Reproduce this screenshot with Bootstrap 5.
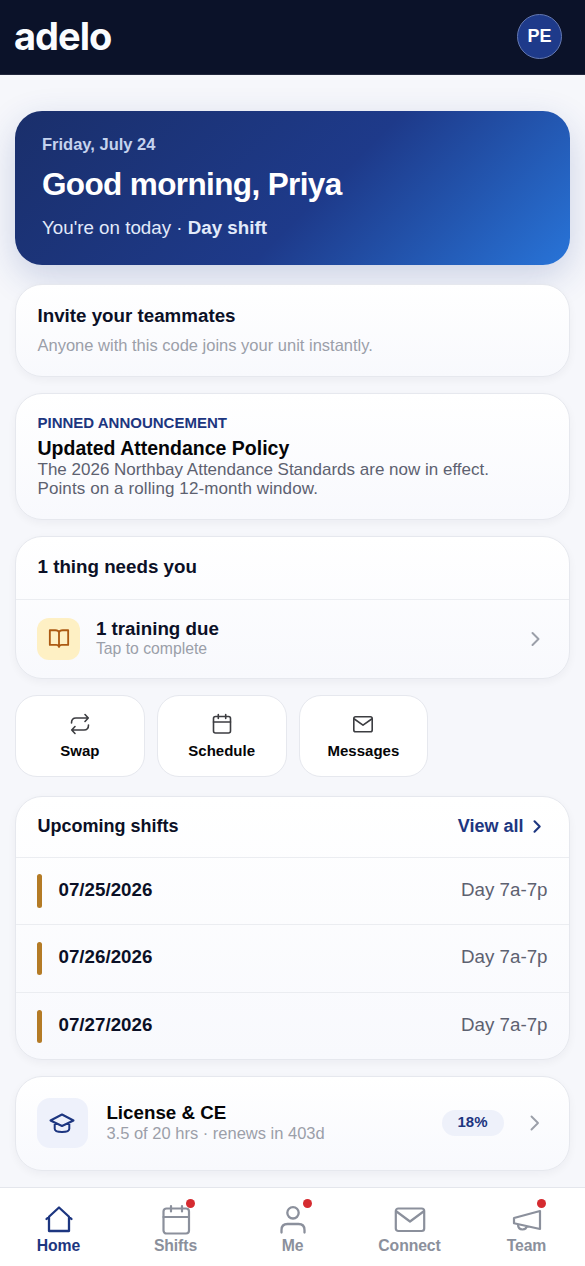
<!DOCTYPE html>
<html lang="en">
<head>
<meta charset="utf-8">
<meta name="viewport" content="width=device-width, initial-scale=1">
<title>adelo</title>
<link href="https://cdn.jsdelivr.net/npm/bootstrap@5.3.0/dist/css/bootstrap.min.css" rel="stylesheet">
<style>
  body { font-family: "Liberation Sans", Arial, sans-serif; background: #f6f7fb; color: #0b1026; line-height: 1.2; overflow: hidden; }
  svg { fill: none; stroke: currentColor; stroke-linecap: round; stroke-linejoin: round; display: block; flex: none; }
  .topbar { height: 75px; background: #0b1229; border-bottom: 1px solid #23283d; padding: 0 23px 2px 14px; }
  .brand { font: 700 38px/1 Inter, sans-serif; letter-spacing: -1px; color: #fafcff; }
  .avatar { width: 45px; height: 45px; background: #1e3a8a; border: 1.5px solid #6478b1; color: #fff; font: 700 18px/1 "Liberation Sans", sans-serif; }
  main { padding: 36px 15px 0; }
  .hero { height: 154px; border-radius: 27px; padding: 24px 27px; color: #fff; background: linear-gradient(135deg, #1a2f6b 0%, #1e3a8a 55%, #2874d8 100%); box-shadow: 0 12px 36px rgba(30,58,138,.2); margin-bottom: 19px; }
  .hero-date { font-size: 16.5px; line-height: 19px; font-weight: 700; color: #c5d3ee; }
  .hero-title { font-size: 31.5px; line-height: 36px; font-weight: 700; letter-spacing: -.02em; margin-top: 12px; }
  .hero-sub { font-size: 18.75px; line-height: 22px; margin-top: 15px; color: #e2eafa; }
  .panel { border: 1px solid #e6e8ee; border-radius: 27px; background: linear-gradient(#fff, #f8f9fd); box-shadow: 0 3px 8px rgba(15,23,42,.045); margin-bottom: 16px; overflow: hidden; }
  .pad { padding-left: 21.5px; padding-right: 21.5px; }
  .invite { height: 93px; padding-top: 20px; }
  .pinned { height: 127px; padding-top: 20px; }
  .heading { font-size: 18.75px; font-weight: 700; line-height: 22px; }
  .muted { color: #9b9fa9; font-size: 16.5px; line-height: 19px; }
  .navy { color: #1d3680; }
  .slate { color: #5d6170; }
  .kicker { font-size: 15px; line-height: 17px; font-weight: 700; }
  .title-lg { font-size: 19.5px; line-height: 22px; font-weight: 700; color: #050507; margin-top: 6px; }
  .copy { font-size: 17px; line-height: 19px; margin-top: 1px; }
  .copy-wide { letter-spacing: .1px; }
  .divide { border-bottom: 1px solid #ebedf1; }
  .tap { font-size: 15.75px; line-height: 18px; }
  .icon-book { width: 43px; height: 42px; margin-left: -.6px; padding-left: 1px; border-radius: 12px; background: #fef0c4; color: #ac5a12; }
  .icon-cap { width: 51px; height: 50px; margin-left: -.6px; border-radius: 13px; background: #eef1fb; color: #1d3680; }
  .tiles { display: grid; grid-template-columns: repeat(4, 1fr); gap: 12px; margin-bottom: 19px; }
  .tile { height: 82px; border: 1px solid #e6e8ee; border-radius: 22px; background: #fff; color: #050507; font-size: 15px; font-weight: 700; line-height: 17px; padding-top: 17px; }
  .tile svg { color: #3c3d41; margin-bottom: 7px; }
  .shift { height: 67.7px; font-size: 18.75px; }
  .shift b, .shift .slate { padding-bottom: 2px; }
  .mark-bar { width: 5px; height: 33.5px; border-radius: 3px; background: #b47b26; margin-left: -.6px; margin-right: 16.6px; }
  .percent { width: 62px; height: 26px; border-radius: 13px; background: #eef1fa; font-size: 15px; font-weight: 700; padding-bottom: 2px; margin-right: 23px; }
  .tabbar { height: 79px; background: #fff; border-top: 1px solid #e4e6ec; }
  .tab { position: relative; flex: 1 1 0; color: #8b909c; font-size: 15.75px; font-weight: 700; line-height: 18px; letter-spacing: -.1px; padding-top: 16px; }
  .tab.navy { color: #1d3680; }
  .tab svg { margin-bottom: 1px; }
  .dot { position: absolute; top: 10.5px; left: calc(50% + 10.5px); width: 9px; height: 9px; border-radius: 50%; background: #d52b30; }
</style>
</head>
<body>
<header class="topbar d-flex align-items-center justify-content-between">
  <span class="brand">adelo</span>
  <span class="avatar rounded-circle d-flex align-items-center justify-content-center">PE</span>
</header>
<main>
  <section class="hero">
    <div class="hero-date">Friday, July 24</div>
    <div class="hero-title">Good morning, Priya</div>
    <div class="hero-sub">You're on today · <b>Day shift</b></div>
  </section>

  <section class="panel pad invite">
    <div class="heading">Invite your teammates</div>
    <div class="muted" style="margin-top:9px">Anyone with this code joins your unit instantly.</div>
  </section>

  <section class="panel pad pinned">
    <div class="kicker navy">PINNED ANNOUNCEMENT</div>
    <div class="title-lg">Updated Attendance Policy</div>
    <div class="copy slate">The 2026 Northbay Attendance Standards are now in effect.<br><span class="copy-wide">Points on a rolling 12-month window.</span></div>
  </section>

  <section class="panel" style="height:143px">
    <div class="pad divide d-flex align-items-center heading" style="height:62.5px;padding-bottom:2px">1 thing needs you</div>
    <div class="pad d-flex align-items-center" style="height:78px">
      <span class="icon-book d-flex align-items-center justify-content-center">
        <svg width="22" height="21" viewBox="0 0 24 22" stroke-width="2"><path d="M12 4.200C11.500 2.600 10 2 8 2H2v16h7c1.800 0 2.600.6 3 2.200.4-1.600 1.200-2.200 3-2.200h7V2h-6c-2 0-3.500.6-4 2.200zV20"/></svg>
      </span>
      <div class="flex-grow-1" style="margin-left:16px;padding-bottom:2px">
        <div class="heading">1 training due</div>
        <div class="muted tap">Tap to complete</div>
      </div>
      <svg class="muted" width="25" height="18" viewBox="0 0 25 18" stroke-width="2"><path d="M9.500 3l6 6-6 6"/></svg>
    </div>
  </section>

  <div class="tiles">
    <div class="tile d-flex flex-column align-items-center">
      <svg width="22" height="22" viewBox="0 0 22 22" stroke-width="1.600"><path d="M16 1.500l3.300 3.500L16 8.500M19.300 5H7C4 5 2.500 6.500 2.500 10M6 20.500L2.700 17 6 13.500M2.700 17H15c3 0 4.500-1.500 4.500-5"/></svg>
      Swap
    </div>
    <div class="tile d-flex flex-column align-items-center">
      <svg width="22" height="22" viewBox="0 0 22 22" stroke-width="1.600"><rect x="2.500" y="3.500" width="17" height="16.500" rx="2"/><path d="M2.500 9h17M7.300 1.500v4M14.700 1.500v4"/></svg>
      Schedule
    </div>
    <div class="tile d-flex flex-column align-items-center">
      <svg width="22" height="22" viewBox="0 0 22 22" stroke-width="1.600"><rect x="1.800" y="3.800" width="18.400" height="15" rx="1.800"/><path d="M2.300 6L11 12.200 19.700 6"/></svg>
      Messages
    </div>
  </div>

  <section class="panel" style="height:264px">
    <div class="pad divide d-flex align-items-center justify-content-between" style="height:60.5px;font-size:18px;font-weight:700">
      <span>Upcoming shifts</span>
      <span class="navy d-flex align-items-center">View all
        <svg class="ms-1" width="20" height="18" viewBox="0 0 20 18" stroke-width="2.100"><path d="M6.500 3.300l5.200 5.200-5.200 5.200"/></svg>
      </span>
    </div>
    <div class="shift pad divide d-flex align-items-center"><span class="mark-bar"></span><b>07/25/2026</b><span class="ms-auto slate">Day 7a-7p</span></div>
    <div class="shift pad divide d-flex align-items-center"><span class="mark-bar"></span><b>07/26/2026</b><span class="ms-auto slate">Day 7a-7p</span></div>
    <div class="shift pad d-flex align-items-center"><span class="mark-bar"></span><b>07/27/2026</b><span class="ms-auto slate">Day 7a-7p</span></div>
  </section>

  <section class="panel pad d-flex align-items-center" style="height:95px;padding-bottom:1px">
    <span class="icon-cap d-flex align-items-center justify-content-center">
      <svg width="26" height="22" viewBox="0 0 26 22" stroke-width="2"><path d="M13 2.500L24.500 8.500 13 14 1.500 8.500zM5.700 10.800v6c0 2 3.500 3.200 7.300 3.200s7.300-1.200 7.300-3.200v-6"/></svg>
    </span>
    <div class="flex-grow-1" style="margin-left:18.5px;padding-bottom:1px">
      <div class="heading" style="color:#050507">License &amp; CE</div>
      <div class="muted">3.5 of 20 hrs · renews in 403d</div>
    </div>
    <span class="percent navy d-flex align-items-center justify-content-center">18%</span>
    <svg class="muted" width="21" height="18" viewBox="0 0 21 18" stroke-width="1.900"><path d="M4.500 2.500L11 9l-6.500 6.500"/></svg>
  </section>
</main>

<nav class="tabbar fixed-bottom d-flex">
  <div class="tab navy d-flex flex-column align-items-center">
    <svg width="32" height="32" viewBox="0 0 32 32" stroke-width="2.300"><path d="M3.500 15L16 3.500 28.500 15M6 13v14h20V13"/></svg>Home
  </div>
  <div class="tab d-flex flex-column align-items-center">
    <svg width="32" height="32" viewBox="0 0 32 32" stroke-width="2.200"><rect x="3.500" y="4.500" width="25.500" height="25" rx="3"/><path d="M3.500 13h25.500M11 2v5.500M22 2v5.500"/></svg>Shifts<span class="dot"></span>
  </div>
  <div class="tab d-flex flex-column align-items-center">
    <svg width="32" height="32" viewBox="0 0 32 32" stroke-width="2.300"><circle cx="16" cy="8.800" r="5.700"/><path d="M4.500 28.500V26c0-4 2-6 6-6h11c4 0 6 2 6 6v2.500"/></svg>Me<span class="dot"></span>
  </div>
  <div class="tab d-flex flex-column align-items-center">
    <svg width="32" height="32" viewBox="0 0 32 32" stroke-width="2.200"><rect x="1.800" y="4.500" width="28.400" height="22.500" rx="2.500"/><path d="M2.500 7.500L16 17.500l13.500-10"/></svg>Connect
  </div>
  <div class="tab d-flex flex-column align-items-center">
    <svg width="32" height="32" viewBox="0 0 32 32" stroke-width="2.200"><path d="M3 14L29 7v18L3 19.200zM7 20.300c0 3.400 2 5.200 4.500 5.200s4-1.500 4.200-3.300"/></svg>Team<span class="dot"></span>
  </div>
</nav>
<script src="https://cdn.jsdelivr.net/npm/bootstrap@5.3.0/dist/js/bootstrap.bundle.min.js"></script>
</body>
</html>
